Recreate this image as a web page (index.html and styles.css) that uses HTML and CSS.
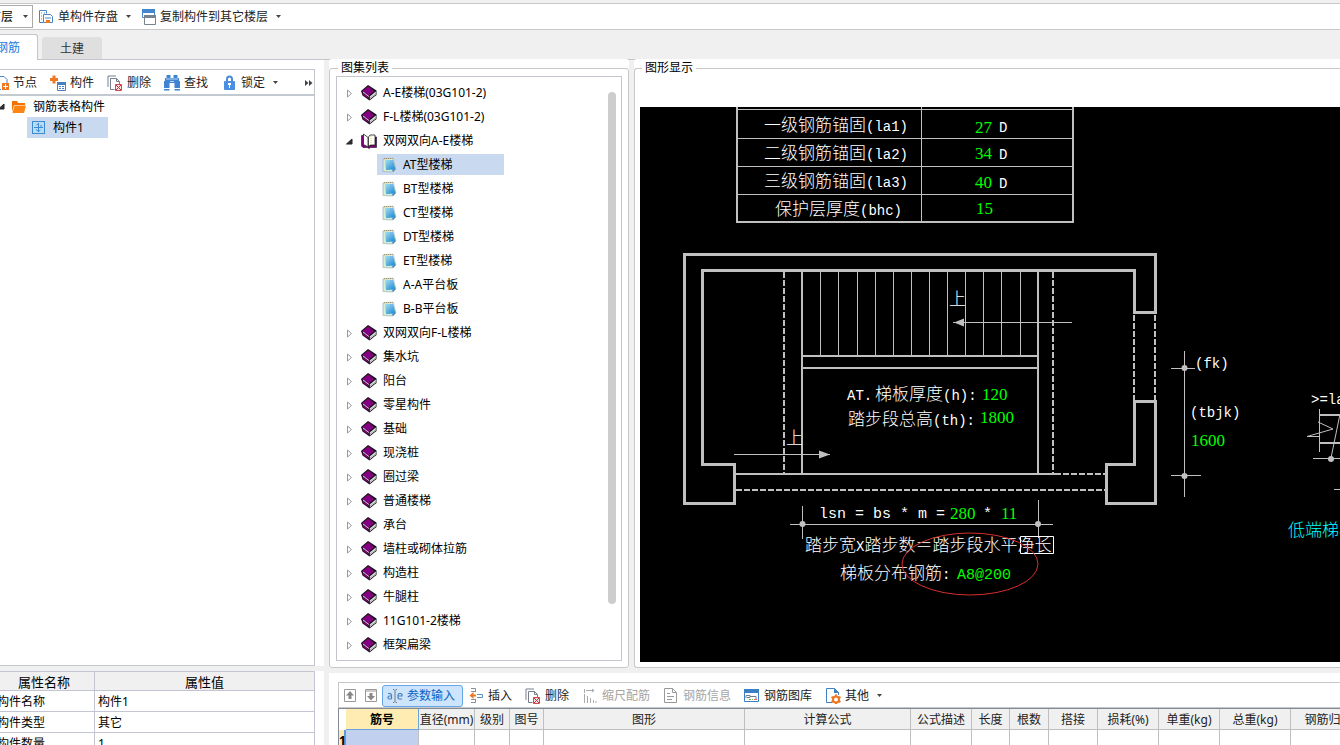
FILE: index.html
```html
<!DOCTYPE html>
<html lang="zh-CN">
<head>
    <meta charset="UTF-8">
    <meta name="viewport" content="width=device-width, initial-scale=1.0">
    <title>钢筋表格构件</title>
    <link rel="stylesheet" href="styles.css">
</head>
<body>

    <!-- Shared icons -->
    <svg class="defs" width="0" height="0" aria-hidden="true">
        <symbol id="i-book" viewBox="0 0 16 16">
            <path d="M0 6 7 0l8.500 5.500v4.500L8.500 15.500 1.500 10.500z" fill="#111"/>
            <path d="M1 6.500 7 1.200l6.500 4.800-6 5z" fill="#800080"/>
            <path d="M1.500 7.500 7.500 12v1.800L2 10z" fill="#800080"/>
            <path d="M8.800 11.500 14.800 6.500v3l-6 4.800z" fill="#eee"/>
            <path d="M9 13l6-4.800" stroke="#888" stroke-width=".7" fill="none"/>
            <path d="M2 7l6 4.600" stroke="#fff" stroke-width=".8" fill="none"/>
        </symbol>
        <symbol id="i-open" viewBox="0 0 16 16">
            <path d="M.5 2.500h2V12h4l1.500 1.500L9.500 12H14V4h1.500v10.500h-6L8 15.500l-1.500-1H2L.5 13z" fill="#800080" stroke="#111" stroke-width=".6"/>
            <path d="M2.500 1 7 4.500v9.500L2.500 11.500z" fill="#fff" stroke="#222" stroke-width=".8"/>
            <path d="M7.500 4 9 2h5v10H9l-1.500 2z" fill="#fff" stroke="#222" stroke-width=".8"/>
            <path d="M10 3v9" stroke="#d8d860" stroke-dasharray="1 1"/>
        </symbol>
        <symbol id="i-note" viewBox="0 0 16 16">
            <path d="M2 2 12 1l3 11-3 3-10-.5z" fill="#d6efd0" stroke="#9aaebb" stroke-width=".7"/>
            <path d="M4 3h8l2.500 9.500L5 13z" fill="url(#blue)"/>
            <path d="M3 1.500h8.500" stroke="#a58a6a" stroke-dasharray="1 1"/>
            <path d="M14.500 12 12 15l-1-2z" fill="#3e83bd"/>
        </symbol>
        <symbol id="i-delete" viewBox="0 0 16 16">
            <path d="M1 12V1h8M3.500 14.500v-11h6l3 3v3M9.500 3.500v3h3M3.500 14.500h4" fill="none" stroke="#75808a"/>
            <path d="M8.500 9.500h6v6h-6z" fill="#fbe3e3" stroke="#cc4a4f"/>
            <path d="m9 10 5 5m0-5-5 5" stroke="#cc2f38"/>
        </symbol>
        <symbol id="i-shut" viewBox="0 0 7 9">
            <path d="M1.500 1v7l4-3.500z" fill="#fff" stroke="#999"/>
        </symbol>
        <symbol id="i-expand" viewBox="0 0 7 9">
            <path d="M6 2v5H.5z" fill="#333" stroke="#222"/>
        </symbol>
        <symbol id="i-down" viewBox="0 0 5 3">
            <path d="M0 0h5L2.500 3z" fill="#444"/>
        </symbol>
        <linearGradient id="blue" x2="1" y2="1">
            <stop stop-color="#a9def5"/>
            <stop offset="1" stop-color="#1283cf"/>
        </linearGradient>
    </svg>

    <header class="toolbar top-bar">
        <div class="floor">
            <select aria-label="楼层"><option>首层</option></select>
            <svg class="down"><use href="#i-down"/></svg>
        </div>
        <button class="btn drop" type="button">
            <svg class="icon" viewBox="0 0 16 16" fill="none" stroke="#4a86c5">
                <path d="M5 13.500H1.500v-12h7v3M3 4h1m-1 3h1m-1 3h1M6 4h1"/>
                <path d="M5.500 5.500h7l2 2v6h-9zM7 9h6"/>
                <path d="M8 11h4v3H8z" fill="#f07b1f" stroke="none"/>
            </svg>
            单构件存盘
            <svg class="down"><use href="#i-down"/></svg>
        </button>
        <button class="btn drop" type="button">
            <svg class="icon" viewBox="0 0 16 16" fill="none">
                <path d="M2.500.500h12v8h-12z" fill="#fff" stroke="#4a8ad0"/><path d="M2 0h13v4H2z" fill="#4287d0"/>
                <path d="M4.500 6.500h11v9h-11z" fill="#fff" stroke="#77838e"/><path d="M4 6h12v3H4z" fill="#77838e"/>
            </svg>
            复制构件到其它楼层
            <svg class="down"><use href="#i-down"/></svg>
        </button>
    </header>

    <nav class="tabs">
        <button class="tab active" type="button">钢筋</button>
        <button class="tab" type="button">土建</button>
    </nav>

    <main class="main">
        <section class="left">
            <div class="left-top">
                <div class="toolbar left-bar">
                    <button class="btn" type="button">
                        <svg class="icon" viewBox="0 0 16 16" fill="none">
                            <path d="M2 1.500h9l3 3V9M2 14.500h6" stroke="#4a86c5"/>
                            <path d="M9 8h7v7H9z" fill="#ee7722"/><path d="M10 11.500h5M12.500 9v5" stroke="#fff"/>
                        </svg>
                        节点
                    </button>
                    <button class="btn" type="button">
                        <svg class="icon" viewBox="0 0 16 16" fill="none">
                            <path d="M4 .5v8M0 4.500h8" stroke="#ee7722" stroke-width="3"/>
                            <path d="M7.500 7.500h8v8h-8z" fill="#fff" stroke="#4a80bd"/><path d="M7 7h9v3H7z" fill="#4a80bd"/>
                            <path d="M9 11.500h2m1 0h2m-5 2h2m1 0h2" stroke="#4a80bd"/>
                        </svg>
                        构件
                    </button>
                    <button class="btn" type="button"><svg class="icon"><use href="#i-delete"/></svg>删除</button>
                    <button class="btn" type="button">
                        <svg class="icon" viewBox="0 0 16 16">
                            <path d="M2.500 0h4v3h3V0h4v3H15v3h1v7h-5.500V8h-5v5H0V6h1V3h1.500zM0 14h5.500v1.500H0zM10.500 14H16v1.500h-5.500z" fill="#3f84d0"/>
                            <path d="M2 4h12M6 6.500h4" stroke="#b9d6f2"/>
                        </svg>
                        查找
                    </button>
                    <button class="btn drop" type="button">
                        <svg class="icon" viewBox="0 0 16 16">
                            <path d="M6 7V4a2.500 2.500 0 0 1 5 0v3" fill="none" stroke="#4a8cd8" stroke-width="2"/>
                            <rect x="3" y="6" width="11" height="9" rx="1" fill="#4a8fe0"/>
                            <path d="M7 8h3v2H9v3H8v-3H7z" fill="#fff"/>
                        </svg>
                        锁定
                        <svg class="down"><use href="#i-down"/></svg>
                    </button>
                    <button class="more" type="button" aria-label="更多">
                        <svg width="8" height="6"><path d="M0 0l3.500 3L0 6zM4 0l3.500 3L4 6z" fill="#444"/></svg>
                    </button>
                </div>
                <ul class="parts">
                    <li class="part-root">
                        <svg class="twist"><use href="#i-expand"/></svg>
                        <svg class="icon" viewBox="0 0 16 16"><path d="M1 13V2h5l1 2h7v2H3z" fill="#f57200"/><path d="M3.500 6.500H15L13 14H1.500z" fill="#ff8512"/></svg>
                        钢筋表格构件
                    </li>
                    <li class="part">
                        <svg class="icon" viewBox="0 0 16 16" fill="none" stroke="#3c8bd0"><rect x="1.500" y="1.500" width="12" height="12" fill="#b8dcf5"/><path d="M7.500 3v9M3 7.500h9M5.500 5l2-1.500M5 9.500l2.500 2 2-1.500M10 5v3"/></svg>
                        构件1
                    </li>
                </ul>
            </div>
            <div class="props-wrap">
                <table class="props">
                    <thead><tr><th class="name">属性名称</th><th>属性值</th></tr></thead>
                    <tbody>
                        <tr><td>构件名称</td><td>构件1</td></tr>
                        <tr><td>构件类型</td><td>其它</td></tr>
                        <tr><td>构件数量</td><td>1</td></tr>
                    </tbody>
                </table>
            </div>
        </section>

        <div class="right">
            <div class="work">
                <fieldset class="group atlas">
                    <legend>图集列表</legend>
                    <div class="list">
                        <ul class="tree">
                            <li><svg class="twist"><use href="#i-shut"/></svg><svg class="icon"><use href="#i-book"/></svg>A-E楼梯(03G101-2)</li>
                            <li><svg class="twist"><use href="#i-shut"/></svg><svg class="icon"><use href="#i-book"/></svg>F-L楼梯(03G101-2)</li>
                            <li><svg class="twist"><use href="#i-expand"/></svg><svg class="icon"><use href="#i-open"/></svg>双网双向A-E楼梯</li>
                            <li class="child selected"><svg class="icon"><use href="#i-note"/></svg>AT型楼梯</li>
                            <li class="child"><svg class="icon"><use href="#i-note"/></svg>BT型楼梯</li>
                            <li class="child"><svg class="icon"><use href="#i-note"/></svg>CT型楼梯</li>
                            <li class="child"><svg class="icon"><use href="#i-note"/></svg>DT型楼梯</li>
                            <li class="child"><svg class="icon"><use href="#i-note"/></svg>ET型楼梯</li>
                            <li class="child"><svg class="icon"><use href="#i-note"/></svg>A-A平台板</li>
                            <li class="child"><svg class="icon"><use href="#i-note"/></svg>B-B平台板</li>
                            <li><svg class="twist"><use href="#i-shut"/></svg><svg class="icon"><use href="#i-book"/></svg>双网双向F-L楼梯</li>
                            <li><svg class="twist"><use href="#i-shut"/></svg><svg class="icon"><use href="#i-book"/></svg>集水坑</li>
                            <li><svg class="twist"><use href="#i-shut"/></svg><svg class="icon"><use href="#i-book"/></svg>阳台</li>
                            <li><svg class="twist"><use href="#i-shut"/></svg><svg class="icon"><use href="#i-book"/></svg>零星构件</li>
                            <li><svg class="twist"><use href="#i-shut"/></svg><svg class="icon"><use href="#i-book"/></svg>基础</li>
                            <li><svg class="twist"><use href="#i-shut"/></svg><svg class="icon"><use href="#i-book"/></svg>现浇桩</li>
                            <li><svg class="twist"><use href="#i-shut"/></svg><svg class="icon"><use href="#i-book"/></svg>圈过梁</li>
                            <li><svg class="twist"><use href="#i-shut"/></svg><svg class="icon"><use href="#i-book"/></svg>普通楼梯</li>
                            <li><svg class="twist"><use href="#i-shut"/></svg><svg class="icon"><use href="#i-book"/></svg>承台</li>
                            <li><svg class="twist"><use href="#i-shut"/></svg><svg class="icon"><use href="#i-book"/></svg>墙柱或砌体拉筋</li>
                            <li><svg class="twist"><use href="#i-shut"/></svg><svg class="icon"><use href="#i-book"/></svg>构造柱</li>
                            <li><svg class="twist"><use href="#i-shut"/></svg><svg class="icon"><use href="#i-book"/></svg>牛腿柱</li>
                            <li><svg class="twist"><use href="#i-shut"/></svg><svg class="icon"><use href="#i-book"/></svg>11G101-2楼梯</li>
                            <li><svg class="twist"><use href="#i-shut"/></svg><svg class="icon"><use href="#i-book"/></svg>框架扁梁</li>
                        </ul>
                        <div class="scroll"></div>
                    </div>
                </fieldset>

                <fieldset class="group view">
                    <legend>图形显示</legend>
                    <svg class="drawing">
                        <g transform="translate(-640 -107)">
                            <!-- anchorage table -->
                            <g class="thin">
                                <path d="M738 138.500h335M738 166.500h335M738 194.500h335M738 109.500h335M921.500 107v114"/>
                            </g>
                            <path class="mid" d="M737 107v115h336V107"/>

                            <!-- walls -->
                            <path class="thick" d="M1155.500 312.500v-58h-471v249h50v-39h-32v-194h432v42z"/>
                            <path class="thick" d="M1134.500 401.500h21v102h-49v-39h28z"/>
                            <path class="mid dash" d="M1134 315v86M1155 315v86M784 272v201M1053 272v201M1055 474h51M736 490h370"/>

                            <!-- flight -->
                            <path class="mid" d="M802 272v202M1038 272v202M802 356h236M802 368h236M736 474h319"/>
                            <path class="thin" d="M820.500 272v83M838.500 272v83M857.500 272v83M875.500 272v83M893.500 272v83M911.500 272v83M929.500 272v83M947.500 272v83M965.500 272v83M983.500 272v83M1001.500 272v83M1020.500 272v83"/>
                            <path class="thin" d="M953 322.500h119M734 454.500h96"/>
                            <path class="solid" d="M954 322.500l10-4v8zM830 454.500l-11-4v8z"/>

                            <!-- dimensions -->
                            <path class="thin" d="M790 524.500h263M802.500 506v33M1038.500 500v38M1184.500 351v146M1171 368.500h24M1171 475.500h30"/>
                            <g class="solid">
                                <circle cx="802.500" cy="524" r="3"/><circle cx="1038" cy="524" r="3"/>
                                <circle cx="1184.500" cy="368" r="3"/><circle cx="1184.500" cy="476" r="3"/>
                                <circle cx="1331" cy="459" r="3"/>
                            </g>

                            <!-- section on the right -->
                            <path class="thin" d="M1319.500 409v43M1318 422l15 7-26 7.500h12M1340 414l-9 44M1313 458.500h600M1334 489.500h600"/>
                            <path class="mid" d="M1319 415h600M1319 443h600"/>

                            <g class="label">
                                <text x="764" y="131">一级钢筋锚固<tspan class="mono">(la1)</tspan></text>
                                <text x="764" y="159">二级钢筋锚固<tspan class="mono">(la2)</tspan></text>
                                <text x="764" y="187">三级钢筋锚固<tspan class="mono">(la3)</tspan></text>
                                <text x="775" y="215">保护层厚度<tspan class="mono">(bhc)</tspan></text>
                                <text class="mono" x="999" y="132">D</text>
                                <text class="mono" x="999" y="159">D</text>
                                <text class="mono" x="999" y="188">D</text>
                                <text x="949" y="305">上</text>
                                <text x="786" y="444">上</text>
                                <text x="847" y="400"><tspan class="mono">AT.</tspan><tspan x="875">梯板厚度</tspan><tspan class="mono">(h):</tspan></text>
                                <text x="848" y="425">踏步段总高<tspan class="mono">(th):</tspan></text>
                                <text class="mono wide" x="819" y="518">lsn = bs * m =</text>
                                <text class="mono wide" x="983" y="518">*</text>
                                <text x="805" y="551">踏步宽<tspan class="mono">X</tspan>踏步数＝踏步段水平净长</text>
                                <text x="840" y="579">梯板分布钢筋<tspan class="mono">:</tspan></text>
                                <text class="mono" x="1195" y="368">(fk)</text>
                                <text class="mono" x="1190" y="417">(tbjk)</text>
                                <text class="mono" x="1311" y="404">&gt;=la</text>
                            </g>
                            <g class="value">
                                <text x="975" y="133">27</text>
                                <text x="975" y="159">34</text>
                                <text x="975" y="188">40</text>
                                <text x="976" y="214">15</text>
                                <text x="982" y="400">120</text>
                                <text x="980" y="423">1800</text>
                                <text x="950" y="519">280</text>
                                <text x="1001" y="519">11</text>
                                <text class="mono wide" x="957" y="579">A8@200</text>
                                <text x="1191" y="446">1600</text>
                            </g>
                            <text class="label end" x="1288" y="536">低端梯板</text>
                            <path class="box" d="M1020.500 536.500h33v17h-33z"/>
                            <ellipse class="ring" cx="970" cy="564" rx="68" ry="31"/>
                        </g>
                    </svg>
                </fieldset>
            </div>

            <section class="bottom">
                <div class="toolbar bar-table">
                    <button class="btn tool" type="button" aria-label="上移"><svg class="icon" viewBox="0 0 16 16"><path d="M2.500 1.500h11v12h-11z" fill="#fff" stroke="#999"/><path d="M8 3l4 4.500H9.500V11h-3V7.500H4z" fill="#888"/></svg></button>
                    <button class="btn tool" type="button" aria-label="下移"><svg class="icon" viewBox="0 0 16 16"><path d="M2.500 1.500h11v12h-11zM2 3h12" fill="#fff" stroke="#999"/><path d="M8 12.500L4 8h2.500V5h3v3H12z" fill="#888"/></svg></button>
                    <button class="btn pressed" type="button">
                        <svg class="icon" viewBox="0 0 16 16" fill="none" stroke="#4a82bd">
                            <path d="M1 5.500h2.500L4.500 7v4M4.500 8H2L.8 9.500 2 11h2.500M11 8h4V6.500l-1-1h-2L11 7v3l1 1h3" stroke-width="1.200"/>
                            <path d="M8 2.500v11M6 1.500h1l1 1 1-1h1M6 14.500h1l1-1 1 1h1" stroke="#777"/>
                        </svg>
                        参数输入
                    </button>
                    <button class="btn" type="button">
                        <svg class="icon" viewBox="0 0 16 16" fill="none">
                            <path d="M3 .5h4.500V4M3 14.500h4.500V11M3 3.500h5M3 11.500h5" stroke="#87919a"/>
                            <path d="M3 7.500h5" stroke="#ee7722" stroke-width="2"/><path d="M5.500 4v7L1.500 7.500z" fill="#ee7722"/>
                            <path d="M9 6.500h5.500v3H9" stroke="#5c91cd"/>
                        </svg>
                        插入
                    </button>
                    <button class="btn" type="button"><svg class="icon"><use href="#i-delete"/></svg>删除</button>
                    <button class="btn" type="button" disabled>
                        <svg class="icon" viewBox="0 0 16 16" fill="none" stroke="#aaa"><path d="M2.500 1v4m0 1v9M4 2.500h8M10 1l2 1.500L10 4M5.500 8v7M8.500 10v5M11.500 12v3M14 13v2"/></svg>
                        缩尺配筋
                    </button>
                    <button class="btn" type="button" disabled>
                        <svg class="icon" viewBox="0 0 16 16" fill="none" stroke="#999"><path d="M1.500.5h8l4 4v10h-12zM9.500.5v4h4M4 5.500h3M4 8.500h7M4 11.500h5"/></svg>
                        钢筋信息
                    </button>
                    <button class="btn" type="button">
                        <svg class="icon" viewBox="0 0 16 16" fill="none"><path d="M.5 2.500h14v11H.5z" stroke="#3b7fc7"/><path d="M0 1h15v4H0z" fill="#3b7fc7"/><path d="M2 10V7.500h4v2H3M6 8.500h6V11" stroke="#75808a"/><path d="M5 11.500h2m1 0h1" stroke="#75b84d"/><path d="M10 11.500h3" stroke="#e66"/></svg>
                        钢筋图库
                    </button>
                    <button class="btn drop" type="button">
                        <svg class="icon" viewBox="0 0 16 16" fill="none"><path d="M7 14.500H1.500V.5h8l4 4V7" stroke="#3f80c4"/><path d="M9 0l5 5H9z" fill="#3f80c4"/><circle cx="11" cy="11.500" r="3" stroke="#ee7722" stroke-width="2"/><path d="M11 6.500v2m0 6v2M6.500 9l2 1m5 3 2 1m0-5-2 1m-5 3-2 1" stroke="#ee7722" stroke-width="2"/></svg>
                        其他
                        <svg class="down"><use href="#i-down"/></svg>
                    </button>
                </div>
                <div class="bars-wrap">
                    <table class="bars">
                        <colgroup>
                            <col class="w7"><col class="w73"><col class="w56"><col class="w35"><col class="w34"><col class="w201"><col class="w166"><col class="w61"><col class="w38"><col class="w39"><col class="w49"><col class="w61"><col class="w61"><col class="w71"><col class="w76">
                        </colgroup>
                        <thead>
                            <tr><th class="corner"></th><th class="current">筋号</th><th>直径(mm)</th><th>级别</th><th>图号</th><th>图形</th><th>计算公式</th><th>公式描述</th><th>长度</th><th>根数</th><th>搭接</th><th>损耗(%)</th><th>单重(kg)</th><th>总重(kg)</th><th>钢筋归类</th></tr>
                        </thead>
                        <tbody>
                            <tr><th class="row-no">1</th><td class="cell-on"></td><td></td><td></td><td></td><td></td><td></td><td></td><td></td><td></td><td></td><td></td><td></td><td></td><td></td></tr>
                        </tbody>
                    </table>
                </div>
            </section>
        </div>
    </main>

</body>
</html>
```
FILE: styles.css
```css
* {
    box-sizing: border-box;
}

body {
    margin: 0;
    height: 100vh;
    overflow: hidden;
    display: flex;
    flex-direction: column;
    padding-top: 3px;
    background: #f0f0f0;
    color: #000;
    font-family: "Noto Sans", "Noto Sans CJK SC", sans-serif;
    font-size: 12px;
    line-height: 16px;
}

ul {
    list-style: none;
    margin: 0;
    padding: 0;
}

button, select {
    font: inherit;
    border: none;
    background: none;
    padding: 0;
}

svg {
    flex: none;
}

.defs {
    position: absolute;
}

.icon {
    width: 16px;
    height: 16px;
}

.down {
    width: 5px;
    height: 3px;
}

.twist {
    width: 7px;
    height: 9px;
}

/* Toolbars */
.toolbar {
    display: flex;
    align-items: center;
    background: #fff;
}

.btn {
    display: flex;
    align-items: center;
    gap: 4px;
    height: 22px;
    flex: none;
    padding: 0 5px;
    margin-right: 3px;
    color: #222;
    white-space: nowrap;
}

.btn:disabled {
    color: #a5a5a5;
}

.drop {
    padding-right: 1px;
}

.drop .down {
    margin-left: 4px;
}

.tool {
    width: 21px;
    padding: 0 2px;
    margin: 0;
}

.pressed {
    border: 1px solid #66a7e8;
    border-radius: 3px;
    background: #cce4fc;
    color: #0a63c4;
    padding: 0 7px 0 4px;
    margin-right: 0;
}

.top-bar {
    height: 27px;
    flex: none;
    border-top: 1px solid #c8c8c8;
    border-bottom: 1px solid #c8c8c8;
}

.floor {
    display: flex;
    align-items: center;
    width: 49px;
    height: 23px;
    margin-left: -16px;
    border: 1px solid #aaa;
}

.floor select {
    appearance: none;
    width: 38px;
    padding-left: 4px;
}

/* Tabs */
.tabs {
    display: flex;
    align-items: flex-end;
    gap: 4px;
    height: 30px;
    flex: none;
    margin-left: -22px;
    border-bottom: 1px solid #c3c6cc;
}

.tab {
    width: 60px;
    height: 22px;
    padding-top: 1px;
    border-radius: 3px 3px 0 0;
    background: #dfdfdf;
    color: #333;
}

.tab.active {
    height: 26px;
    margin-bottom: -1px;
    border: 1px solid #c3c6cc;
    border-bottom: none;
    background: #fff;
    color: #1a7ae0;
}

.main {
    display: flex;
    flex: 1;
    gap: 5px;
    min-height: 0;
}

/* Left column */
.left {
    display: flex;
    flex-direction: column;
    width: 324px;
    flex: none;
    padding: 9px 9px 0 0;
    background: #fff;
}

.left-top {
    flex: 1;
    border: 1px solid #c3c6cc;
    border-left: none;
}

.left-bar {
    height: 26px;
    padding-top: 1px;
    padding-right: 1px;
    border-bottom: 2px solid #c3c9d1;
}

.left-bar .btn:first-child {
    margin-left: -12px;
}

.more {
    display: flex;
    margin-left: auto;
}

.part-root {
    display: flex;
    align-items: center;
    gap: 6px;
    height: 21px;
    margin-left: -2px;
}

.part {
    display: flex;
    align-items: center;
    gap: 6px;
    width: 81px;
    height: 21px;
    margin-left: 27px;
    padding-left: 4px;
    background: #c9d9f0;
}

.props-wrap {
    height: 79px;
    flex: none;
    overflow: hidden;
    margin-right: -9px;
    padding: 5px 9px 0 0;
    background: linear-gradient(#f0f0f0 5px, #fff 5px);
}

.props {
    width: 322px;
    margin-left: -7px;
    border-collapse: collapse;
    table-layout: fixed;
}

.props th, .props td {
    height: 21px;
    padding: 1px 3px 0;
    border: 1px solid #c3c6d2;
    text-align: left;
}

.props th {
    height: 19px;
    background: #f0f0f0;
    font-size: 13px;
    font-weight: normal;
    text-align: center;
}

.props .name {
    width: 101px;
}

/* Atlas list and drawing */
.right {
    display: flex;
    flex-direction: column;
    flex: 1;
    gap: 5px;
    min-width: 0;
}

.work {
    display: flex;
    flex: 1;
    gap: 5px;
    min-height: 0;
}

.group {
    display: flex;
    flex-direction: column;
    min-width: 0;
    margin: 0;
    padding: 0 6px 6px;
    border: 1px solid #c8c8c8;
    border-radius: 3px;
    background: #fff;
    box-shadow: 0 -9px #fff;
}

.group legend {
    margin-left: 2px;
    padding: 0 3px;
    background: #fff;
}

.atlas {
    width: 300px;
    flex: none;
}

.list {
    display: flex;
    flex: 1;
    height: 100%;
    padding: 4px 5px 0 9px;
    border: 1px solid #c3c6cc;
}

.tree {
    display: flex;
    flex-direction: column;
    flex: 1;
}

.tree li {
    display: flex;
    align-items: center;
    height: 24px;
}

.tree .twist {
    margin-right: 8px;
}

.tree .icon {
    margin-right: 6px;
}

.tree .child {
    width: 127px;
    height: 21px;
    margin: 1px 0 2px 31px;
    padding-left: 4px;
}

.tree .selected {
    background: #c9d9f0;
}

.scroll {
    width: 8px;
    height: 512px;
    margin-top: 11px;
    border-radius: 4px;
    background: #cdcdcd;
}

.view {
    flex: 1;
    padding: 0 0 5px 5px;
    border-right: none;
    border-radius: 3px 0 0 3px;
}

.drawing {
    display: block;
    flex: 1;
    width: 100%;
    min-height: 0;
    margin-top: 31px;
    background: #000;
}

.thin, .mid, .thick {
    fill: none;
    stroke: #c0c0c0;
}

.mid {
    stroke-width: 2px;
}

.thick {
    stroke-width: 3px;
}

.dash {
    stroke-dasharray: 6 2;
}

.solid {
    fill: #c0c0c0;
}

.label {
    fill: #fff;
    font: 300 17px/20px "Noto Sans CJK SC", sans-serif;
}

.mono, .value .mono {
    font-family: "Liberation Mono", monospace;
    font-size: 14px;
}

.mono.wide, .value .wide {
    font-size: 15px;
}

.value {
    fill: #0f0;
    font: 17px/20px "Liberation Serif", serif;
}

.end {
    fill: #0ff;
}

.box {
    fill: none;
    stroke: #fff;
}

.ring {
    fill: none;
    stroke: #d62f2f;
}

/* Rebar table */
.bottom {
    height: 72px;
    flex: none;
    padding: 9px 0 0 9px;
    overflow: hidden;
    background: #fff;
}

.bar-table {
    height: 26px;
    padding-top: 1px;
    padding-left: 1px;
    border: 1px solid #c8c8c8;
    border-right: none;
}

.bars-wrap {
    overflow: hidden;
    border-top: 1px solid #858b96;
    border-left: 1px solid #858b96;
}

.bars {
    width: 1028px;
    border-collapse: separate;
    border-spacing: 0;
    table-layout: fixed;
}

.bars th, .bars td {
    height: 22px;
    padding: 0;
    border-right: 1px solid #bfbfbf;
    border-bottom: 1px solid #bfbfbf;
    font-weight: normal;
    white-space: nowrap;
}

.bars thead th {
    height: 21px;
    padding-top: 2px;
    background: #f0f0f0;
    color: #222;
}

.bars thead .corner {
    border: none;
    background: #fff;
}

.bars thead .current {
    border-color: #6aa5e0;
    background: #ffecb3;
    color: #000;
    font-weight: bold;
}

.bars .row-no {
    border-right: 2px solid #5b9be0;
    background: #ffecb3;
    font-weight: bold;
}

.bars .cell-on {
    background: #c1d0ee;
}

.w7 { width: 7px; }
.w34 { width: 34px; }
.w35 { width: 35px; }
.w38 { width: 38px; }
.w39 { width: 39px; }
.w49 { width: 49px; }
.w56 { width: 56px; }
.w61 { width: 61px; }
.w71 { width: 71px; }
.w73 { width: 73px; }
.w76 { width: 76px; }
.w166 { width: 166px; }
.w201 { width: 201px; }
```
